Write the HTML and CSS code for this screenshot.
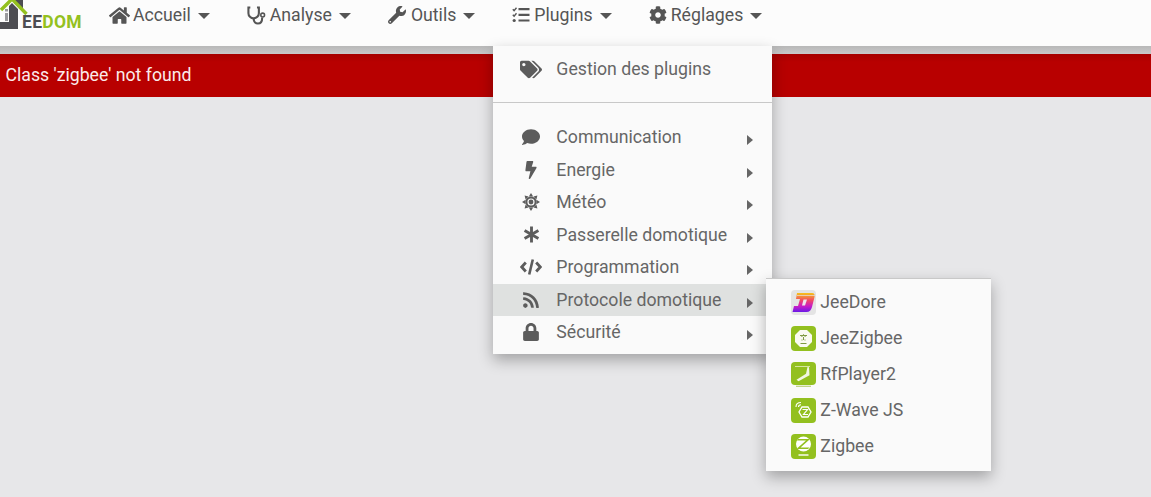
FILE: index.html
```html
<!DOCTYPE html>
<html lang="fr">
  <head>
    <meta charset="UTF-8" />
    <meta name="viewport" content="width=device-width, initial-scale=1.0" />
    <title>Jeedom</title>
    <link rel="stylesheet" href="styles.css">
  </head>
  <body>
    <!-- Top navigation -->
    <nav class="navbar">
      <div class="brand">
        <svg class="brand-mark" viewBox="0 0 28 30" aria-hidden="true">
          <path d="M14 0h9v12L14 3z" fill="#4d4d52" />
          <path d="M9 6l3-3 6 6v20H0v-7h9z" fill="#4d4d52" />
          <rect x="5" y="13" width="3" height="8" fill="#9a9a9d" />
          <rect x="5" y="9" width="3" height="2.500" fill="#9a9a9d" />
          <path d="M1 10L11 0M11 -2L26.500 14" fill="none" stroke="#94c11f" stroke-width="3.400" />
        </svg>
        <span class="brand-name">EE<span class="brand-green">DOM</span></span>
      </div>
      <ul class="nav-list">
        <li class="nav-item">
          <svg class="nav-icon" viewBox="0 0 576 512"><path d="M280.37 148.26L96 300.11V464a16 16 0 0 0 16 16l112.06-.29a16 16 0 0 0 15.92-16V368a16 16 0 0 1 16-16h64a16 16 0 0 1 16 16v95.64a16 16 0 0 0 16 16.05L464 480a16 16 0 0 0 16-16V300L295.67 148.26a12.19 12.19 0 0 0-15.3 0zM571.6 251.47L488 182.56V44.05a12 12 0 0 0-12-12h-56a12 12 0 0 0-12 12v72.61L318.47 43a48 48 0 0 0-61 0L4.34 251.47a12 12 0 0 0-1.6 16.9l25.5 31A12 12 0 0 0 45.15 301l235.22-193.74a12.19 12.19 0 0 1 15.3 0L530.9 301a12 12 0 0 0 16.9-1.6l25.5-31a12 12 0 0 0-1.7-16.93z" /></svg>
          Accueil <span class="caret"></span>
        </li>
        <li class="nav-item">
          <svg class="nav-icon icon-steth" viewBox="0 0 20 20"><path d="M3.500 1.500H1.500v6a5.500 5.500 0 0 0 11 0v-6h-2" fill="none" stroke="currentColor" stroke-width="2.200" /><path d="M7 13.500c0 3 2 5 4.500 5s4.500-2 4.500-6.500" fill="none" stroke="currentColor" stroke-width="2.200" /><circle cx="16.500" cy="9.500" r="2" fill="none" stroke="currentColor" stroke-width="1.600" /></svg>
          Analyse <span class="caret"></span>
        </li>
        <li class="nav-item">
          <svg class="nav-icon icon-wrench" viewBox="0 0 512 512"><path d="M507.73 109.1c-2.24-9.03-13.54-12.09-20.12-5.51l-74.36 74.36-67.88-11.31-11.31-67.88 74.36-74.36c6.62-6.62 3.43-17.9-5.66-20.16-47.38-11.74-99.55.91-136.58 37.93-39.64 39.64-50.55 97.1-34.05 147.2L18.74 402.76c-24.99 24.99-24.99 65.51 0 90.5 24.99 24.99 65.51 24.99 90.5 0l213.21-213.21c50.12 16.71 107.47 5.68 147.37-34.22 37.07-37.07 49.7-89.32 37.91-136.73zM64 472c-13.25 0-24-10.75-24-24 0-13.26 10.75-24 24-24s24 10.74 24 24c0 13.25-10.75 24-24 24z" /></svg>
          Outils <span class="caret"></span>
        </li>
        <li class="nav-item">
          <svg class="nav-icon icon-tasks" viewBox="0 0 18 16"><path d="M.8 2.300l1.300 1.300L4.500.8M.8 7.800l1.300 1.300 2.400-2.800" fill="none" stroke="currentColor" stroke-width="1.400" /><circle cx="2.200" cy="13.500" r="1.600" /><path d="M6.500 1h11v2.200h-11zM6.500 6.700h11v2.200h-11zM6.500 12.400h11v2.200h-11z" /></svg>
          Plugins <span class="caret"></span>

          <!-- Plugins dropdown -->
          <div class="dropdown">
            <div class="menu-row menu-row-head">
              <span class="menu-icon"><svg class="icon-tags" viewBox="0 0 640 512"><path d="M497.941 225.941L286.059 14.059A48 48 0 0 0 252.118 0H48C21.49 0 0 21.49 0 48v204.118a48 48 0 0 0 14.059 33.941l211.882 211.882c18.744 18.745 49.136 18.746 67.882 0l204.118-204.118c18.745-18.745 18.745-49.137 0-67.882zM112 160c-26.51 0-48-21.49-48-48s21.49-48 48-48 48 21.49 48 48-21.49 48-48 48zm513.941 133.823L421.823 497.941c-18.745 18.745-49.137 18.745-67.882 0l-.36-.36L527.64 323.522c16.999-16.999 26.36-39.6 26.36-63.64s-9.362-46.641-26.36-63.64L331.397 0h48.721a48 48 0 0 1 33.941 14.059l211.882 211.882c18.745 18.745 18.745 49.137 0 67.882z" /></svg></span>
              Gestion des plugins
            </div>
            <div class="divider"></div>
            <div class="menu-row">
              <span class="menu-icon"><svg class="icon-comment" viewBox="0 0 512 512"><path d="M256 32C114.6 32 0 125.1 0 240c0 49.6 21.4 95 57 130.7C44.5 421.1 2.7 466 2.2 466.5c-2.2 2.3-2.8 5.7-1.5 8.7S4.8 480 8 480c66.3 0 116-31.8 140.6-51.4 32.7 12.3 69 19.4 107.4 19.4 141.4 0 256-93.1 256-208S397.4 32 256 32z" /></svg></span>
              Communication <span class="arrow"></span>
            </div>
            <div class="menu-row">
              <span class="menu-icon"><svg class="icon-bolt" viewBox="0 0 320 512"><path d="M296 160H180.6l42.6-129.8C227.2 15 215.7 0 200 0H56C44 0 33.8 8.9 32.2 20.8l-32 240C-1.7 275.2 9.5 288 24 288h118.7L96.6 482.5c-3.6 15.2 8 29.5 23.3 29.5 8.4 0 16.4-4.4 20.8-12l176-304c9.3-15.9-2.2-36-20.7-36z" /></svg></span>
              Energie <span class="arrow"></span>
            </div>
            <div class="menu-row">
              <span class="menu-icon"><svg class="icon-sun" viewBox="0 0 18 18"><circle cx="9" cy="9" r="4.600" fill="none" stroke="currentColor" stroke-width="2" /><circle cx="9" cy="9" r="2.400" /><path d="M9 0l2.200 3.600H6.800zM9 18l-2.200-3.600h4.400zM0 9l3.600-2.200v4.400zM18 9l-3.600 2.200V6.800zM2.600 2.600l4 1-3 3zM15.400 15.400l-4-1 3-3zM15.400 2.600l-1 4-3-3zM2.600 15.400l1-4 3 3z" /></svg></span>
              Météo <span class="arrow"></span>
            </div>
            <div class="menu-row">
              <span class="menu-icon"><svg class="icon-asterisk" viewBox="0 0 16 16"><path d="M8 .5v15M1.500 4.250l13 7.500M14.500 4.250l-13 7.500" fill="none" stroke="currentColor" stroke-width="2.700" /></svg></span>
              Passerelle domotique <span class="arrow"></span>
            </div>
            <div class="menu-row">
              <span class="menu-icon"><svg class="icon-code" viewBox="0 0 22 16"><path d="M5.800 3.500L1.700 8l4.100 4.500M16.200 3.500l4.100 4.500-4.100 4.500" fill="none" stroke="currentColor" stroke-width="2.800" /><path d="M12.800 .5L9.200 15.500" fill="none" stroke="currentColor" stroke-width="2.600" /></svg></span>
              Programmation <span class="arrow"></span>
            </div>
            <div class="menu-row menu-row-active">
              <span class="menu-icon"><svg class="icon-rss" viewBox="0 0 448 512"><path d="M128.081 415.959c0 35.369-28.672 64.041-64.041 64.041S0 451.328 0 415.959s28.672-64.041 64.041-64.041 64.04 28.673 64.04 64.041zm175.66 47.25c-8.354-154.6-132.185-278.587-286.95-286.95C7.656 175.765 0 183.105 0 192.253v48.069c0 8.415 6.49 15.472 14.887 16.018 111.832 7.284 201.473 96.702 208.772 208.772.547 8.397 7.604 14.887 16.018 14.887h48.069c9.149.001 16.489-7.655 15.995-16.79zm144.249.288C439.596 229.677 251.465 40.445 16.503 32.01 7.473 31.686 0 38.981 0 48.016v48.068c0 8.625 6.835 15.645 15.453 15.999 191.179 7.839 344.627 161.316 352.465 352.465.353 8.618 7.373 15.453 15.999 15.453h48.068c9.034-.001 16.329-7.474 16.005-16.504z" /></svg></span>
              Protocole domotique <span class="arrow"></span>

              <!-- Protocol submenu -->
              <div class="submenu">
                <div class="sub-row">
                  <svg class="plugin-icon" viewBox="0 0 25 25">
                    <defs>
                      <linearGradient id="doreGrad" x1="0" y1="0" x2="0" y2="1">
                        <stop offset="0" stop-color="#f7c416" />
                        <stop offset="0.4" stop-color="#f0456a" />
                        <stop offset="0.7" stop-color="#c81cc8" />
                        <stop offset="1" stop-color="#6a1ae6" />
                      </linearGradient>
                    </defs>
                    <rect width="25" height="25" rx="4" fill="#e4e4e4" />
                    <path d="M6 3h15c2.500 0 3 2 2.500 4l-2.500 10c-.8 3-2.500 5-5.500 5H1.500L3 16h4l2-7H5z" fill="url(#doreGrad)" />
                    <path d="M12.500 9.500h3.500l-2 6h-3z" fill="#efe6ee" />
                    <path d="M6 5.500h18" stroke="#e4e4e4" stroke-width="0.700" />
                  </svg>
                  JeeDore
                </div>
                <div class="sub-row">
                  <svg class="plugin-icon" viewBox="0 0 25 25">
                    <rect width="25" height="25" rx="4" fill="#93c01f" />
                    <path d="M9 4h7l5 5v7l-5 5H9l-5-5V9z" fill="#fafaf0" />
                    <path d="M9 9.500h7M10.500 11l2-2.500 2 2.500M12.500 11v3M10.500 14h1M13.500 14h1M9.500 17.500h6" fill="none" stroke="#7f9a40" stroke-width="1" />
                  </svg>
                  JeeZigbee
                </div>
                <div class="sub-row">
                  <svg class="plugin-icon" viewBox="0 0 25 25">
                    <rect width="25" height="23" rx="4" fill="#93c01f" />
                    <path d="M4 4.500h15" stroke="#d6e6a0" stroke-width="1" />
                    <path d="M16.500 5l1.500 .2 .5 8-11 6-2-1.500 9.500-6z" fill="#f2f6e2" />
                    <path d="M5 24.300h15" stroke="#b9cf7a" stroke-width="1.200" />
                  </svg>
                  RfPlayer2
                </div>
                <div class="sub-row">
                  <svg class="plugin-icon" viewBox="0 0 25 25">
                    <rect width="25" height="25" rx="4" fill="#93c01f" />
                    <path d="M11 9h6l3 5-3 5h-6l-3-5z" fill="none" stroke="#fff" stroke-width="1.300" />
                    <path d="M11.500 11.500h5l-4 5h4.500" fill="none" stroke="#fff" stroke-width="1.200" />
                    <path d="M5 9c0-3 1.500-4.500 5-4.500M7.500 9c0-1.500 .8-2.300 2.500-2.300" fill="none" stroke="#fff" stroke-width="1.100" />
                  </svg>
                  Z-Wave JS
                </div>
                <div class="sub-row">
                  <svg class="plugin-icon" viewBox="0 0 25 25">
                    <rect width="25" height="25" rx="4" fill="#93c01f" />
                    <circle cx="12.500" cy="10" r="7.500" fill="#fff" />
                    <path d="M7 5h11v1L9.500 13.500H18.500L17 15H6.500v-1L15 6.500H6z" fill="#93c01f" />
                    <path d="M7.500 21h10" stroke="#fff" stroke-width="1.400" />
                  </svg>
                  Zigbee
                </div>
              </div>
            </div>
            <div class="menu-row">
              <span class="menu-icon"><svg class="icon-lock" viewBox="0 0 448 512"><path d="M400 224h-24v-72C376 68.2 307.8 0 224 0S72 68.2 72 152v72H48c-26.5 0-48 21.5-48 48v192c0 26.5 21.5 48 48 48h352c26.5 0 48-21.5 48-48V272c0-26.5-21.500-48-48-48zm-104 0H152v-72c0-39.7 32.3-72 72-72s72 32.3 72 72v72z" /></svg></span>
              Sécurité <span class="arrow"></span>
            </div>
          </div>
        </li>
        <li class="nav-item">
          <svg class="nav-icon icon-cog" viewBox="0 0 512 512"><path d="M487.4 315.7l-42.6-24.6c4.3-23.2 4.3-47 0-70.2l42.6-24.6c4.9-2.8 7.1-8.6 5.5-14-11.1-35.6-30-67.8-54.7-94.6-3.8-4.1-10-5.1-14.8-2.3L380.8 110c-17.9-15.4-38.5-27.3-60.8-35.1V25.8c0-5.6-3.9-10.5-9.4-11.7-36.7-8.2-74.3-7.8-109.2 0-5.5 1.2-9.4 6.1-9.4 11.7V75c-22.2 7.9-42.8 19.8-60.8 35.1L88.7 85.5c-4.9-2.8-11-1.9-14.8 2.3-24.7 26.7-43.6 58.9-54.7 94.6-1.7 5.4.6 11.2 5.5 14L67.3 221c-4.3 23.2-4.3 47 0 70.2l-42.6 24.6c-4.9 2.8-7.1 8.6-5.5 14 11.1 35.6 30 67.8 54.7 94.6 3.8 4.1 10 5.1 14.8 2.3l42.6-24.6c17.9 15.4 38.5 27.3 60.8 35.1v49.2c0 5.6 3.9 10.5 9.4 11.7 36.7 8.2 74.3 7.8 109.2 0 5.5-1.2 9.4-6.1 9.4-11.7v-49.2c22.2-7.9 42.8-19.8 60.8-35.1l42.6 24.6c4.9 2.8 11 1.9 14.8-2.3 24.7-26.7 43.6-58.9 54.7-94.6 1.5-5.5-.7-11.3-5.6-14.1zM256 336c-44.1 0-80-35.9-80-80s35.9-80 80-80 80 35.9 80 80-35.9 80-80 80z" /></svg>
          Réglages <span class="caret"></span>
        </li>
      </ul>
    </nav>
    <div class="nav-shadow"></div>

    <div class="alert">Class 'zigbee' not found</div>
  </body>
</html>
```

FILE: styles.css
```css
html,
body {
  height: 100%;
}
body {
  margin: 0;
  background-color: #e7e7e9;
  font-family: Roboto, "Liberation Sans", sans-serif;
  font-size: 17.7px;
  overflow: hidden;
}
svg {
  display: block;
  fill: currentColor;
}

/* Navbar */
.navbar {
  display: flex;
  height: 46px;
  background-color: #fcfcfc;
  color: #555;
}
.brand {
  display: flex;
  width: 90.5px;
  overflow: hidden;
  flex-shrink: 0;
}
.brand-mark {
  width: 28px;
  height: 30px;
  flex-shrink: 0;
}
.brand-name {
  margin: 12px 0 0 -6px;
  font-size: 17.5px;
  line-height: 20px;
  font-weight: 700;
  letter-spacing: 0.3px;
  color: #4d4d52;
}
.brand-green {
  color: #94c11f;
}
.nav-list {
  display: flex;
  margin: 0;
  padding: 0;
  list-style: none;
}
.nav-item {
  position: relative;
  display: flex;
  align-items: center;
  height: 30px;
  padding: 0 18.5px;
  white-space: nowrap;
}
.nav-icon {
  width: 21px;
  height: 19px;
  margin-right: 3px;
}
.icon-steth {
  width: 19px;
  height: 19px;
  margin-right: 4px;
}
.icon-wrench {
  width: 18px;
  height: 18px;
  margin-right: 5px;
}
.icon-tasks {
  width: 18px;
  height: 16px;
  margin-right: 4px;
}
.icon-cog {
  width: 18px;
  height: 18px;
  margin-right: 4px;
}
.caret {
  width: 0;
  height: 0;
  margin: 2px 0 0 7px;
  border-top: 6px solid #555;
  border-left: 6px solid transparent;
  border-right: 6px solid transparent;
}
.nav-shadow {
  height: 8px;
  background: linear-gradient(to bottom, #b8b8b8, #c9c9ca);
}

/* Error banner */
.alert {
  height: 43px;
  padding-left: 5.5px;
  line-height: 42px;
  color: #fbeaea;
  background: linear-gradient(to bottom, #a60000, #b80000 8px);
}

/* Plugins dropdown */
.dropdown {
  position: absolute;
  top: 46px;
  left: -0.5px;
  z-index: 10;
  width: 279px;
  height: 308px;
  background-color: #fafafa;
  color: #666;
  box-shadow: 0 6px 14px rgba(0, 0, 0, 0.3);
}
.menu-row {
  position: relative;
  display: flex;
  align-items: center;
  height: 32.5px;
  padding-left: 27px;
}
.menu-row-head {
  height: 46px;
}
.menu-row-active {
  background-color: #dfe1e0;
}
.menu-icon {
  display: flex;
  justify-content: center;
  width: 22px;
  margin-right: 14px;
  color: #5c5c5c;
}
.icon-tags {
  width: 24px;
  height: 19px;
}
.icon-comment {
  width: 18px;
  height: 18px;
}
.icon-bolt {
  width: 12px;
  height: 18px;
}
.icon-sun {
  width: 18px;
  height: 18px;
}
.icon-asterisk {
  width: 17px;
  height: 17px;
}
.icon-code {
  width: 22px;
  height: 16px;
}
.icon-rss {
  width: 16px;
  height: 18px;
}
.icon-lock {
  width: 16px;
  height: 18px;
}
.divider {
  height: 1px;
  margin: 10px 0 18px;
  background-color: #c8c8c8;
}
.arrow {
  position: absolute;
  top: 14px;
  left: 254px;
  width: 0;
  height: 0;
  border-left: 6px solid #666;
  border-top: 5.5px solid transparent;
  border-bottom: 5.5px solid transparent;
}

/* Protocol submenu */
.submenu {
  position: absolute;
  top: -5.5px;
  left: 273px;
  width: 225px;
  height: 193px;
  padding-top: 5px;
  box-sizing: border-box;
  background-color: #fafafa;
  border-top: 1px solid #c8c8c8;
  box-shadow: 0 6px 14px rgba(0, 0, 0, 0.3);
}
.sub-row {
  display: flex;
  align-items: center;
  height: 36px;
  padding-left: 25px;
}
.plugin-icon {
  width: 25px;
  height: 25px;
  margin-right: 4px;
}
```
